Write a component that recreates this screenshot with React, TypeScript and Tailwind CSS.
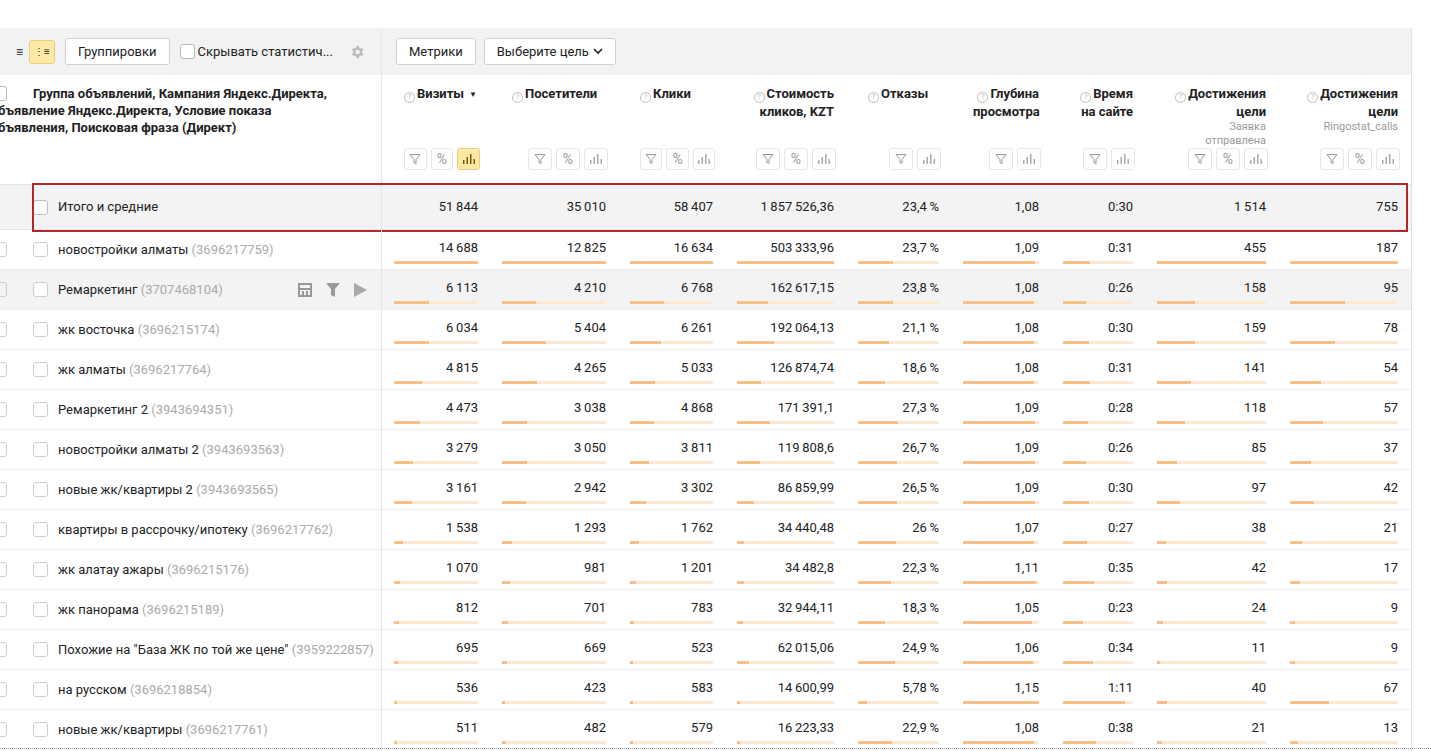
import React from "react";

type Col = { w: number; title: string[]; sub?: string[]; pct: boolean; sorted?: boolean; max: number; parse: (s: string) => number };
const num = (s: string) => parseFloat(s.replace(/[\s\u2009]/g, "").replace(",", ".").replace("%", ""));
const time = (s: string) => { const [m, x] = s.split(":").map(Number); return m * 60 + x; };
const cols: Col[] = [
  { w: 108, title: ["Визиты"], pct: true, sorted: true, max: 14688, parse: num },
  { w: 128, title: ["Посетители"], pct: true, max: 12825, parse: num },
  { w: 107, title: ["Клики"], pct: true, max: 16634, parse: num },
  { w: 121, title: ["Стоимость", "кликов, KZT"], pct: true, max: 503334, parse: num },
  { w: 105, title: ["Отказы"], pct: false, max: 55, parse: num },
  { w: 100, title: ["Глубина", "просмотра"], pct: false, max: 1.15, parse: num },
  { w: 94, title: ["Время", "на сайте"], pct: false, max: 80, parse: time },
  { w: 133, title: ["Достижения", "цели"], sub: ["Заявка", "отправлена"], pct: true, max: 455, parse: num },
  { w: 132, title: ["Достижения", "цели"], sub: ["Ringostat_calls"], pct: true, max: 187, parse: num },
];
const t = (s: string) => s.replace(/ /g, "\u2009");
const total = ["51 844", "35 010", "58 407", "1 857 526,36", "23,4 %", "1,08", "0:30", "1 514", "755"];
const rows: [string, string, string[]][] = [
  ["новостройки алматы", "3696217759", ["14 688", "12 825", "16 634", "503 333,96", "23,7 %", "1,09", "0:31", "455", "187"]],
  ["Ремаркетинг", "3707468104", ["6 113", "4 210", "6 768", "162 617,15", "23,8 %", "1,08", "0:26", "158", "95"]],
  ["жк восточка", "3696215174", ["6 034", "5 404", "6 261", "192 064,13", "21,1 %", "1,08", "0:30", "159", "78"]],
  ["жк алматы", "3696217764", ["4 815", "4 265", "5 033", "126 874,74", "18,6 %", "1,08", "0:31", "141", "54"]],
  ["Ремаркетинг 2", "3943694351", ["4 473", "3 038", "4 868", "171 391,1", "27,3 %", "1,09", "0:28", "118", "57"]],
  ["новостройки алматы 2", "3943693563", ["3 279", "3 050", "3 811", "119 808,6", "26,7 %", "1,09", "0:26", "85", "37"]],
  ["новые жк/квартиры 2", "3943693565", ["3 161", "2 942", "3 302", "86 859,99", "26,5 %", "1,09", "0:30", "97", "42"]],
  ["квартиры в рассрочку/ипотеку", "3696217762", ["1 538", "1 293", "1 762", "34 440,48", "26 %", "1,07", "0:27", "38", "21"]],
  ["жк алатау ажары", "3696215176", ["1 070", "981", "1 201", "34 482,8", "22,3 %", "1,11", "0:35", "42", "17"]],
  ["жк панорама", "3696215189", ["812", "701", "783", "32 944,11", "18,3 %", "1,05", "0:23", "24", "9"]],
  ["Похожие на \"База ЖК по той же цене\"", "3959222857", ["695", "669", "523", "62 015,06", "24,9 %", "1,06", "0:34", "11", "9"]],
  ["на русском", "3696218854", ["536", "423", "583", "14 600,99", "5,78 %", "1,15", "1:11", "40", "67"]],
  ["новые жк/квартиры", "3696217761", ["511", "482", "579", "16 223,33", "22,9 %", "1,08", "0:38", "21", "13"]],
];

const Filter = () => (
  <svg width="12" height="12" viewBox="0 0 12 12" fill="none" stroke="#999" strokeWidth="1"><path d="M1 1.5h10L7 6.5v4L5 9.5v-3z" /></svg>
);
const Bars = ({ c = "#999" }: { c?: string }) => (
  <svg width="12" height="10" viewBox="0 0 12 10" fill={c}><rect x="0" y="6" width="1.5" height="4" /><rect x="3.5" y="3" width="1.5" height="7" /><rect x="7" y="0" width="1.5" height="10" /><rect x="10.5" y="5" width="1.5" height="5" /></svg>
);
const Q = () => <span className="inline-flex w-[11px] h-[11px] rounded-full border border-[#bbb] text-[8px] leading-none items-center justify-center text-[#bbb] mr-[2px] font-normal align-[-1px]">?</span>;
const Btn = ({ children, active }: { children: React.ReactNode; active?: boolean }) => (
  <span className={`inline-flex w-[24px] h-[22px] items-center justify-center border rounded-[3px] text-[14px] text-[#999] ${active ? "bg-[#fde8a5] border-[#e8cf7a]" : "bg-white border-[#e6e6e6]"}`}>{children}</span>
);
const Box = () => <span className="inline-block w-[15px] h-[15px] border border-[#bbb] rounded-[3px] bg-white" />;

export default function App() {
  return (
    <div className="w-[1431px] h-[752px] bg-white overflow-hidden relative text-[13px] text-[#222]" style={{ fontFamily: "Roboto, 'Liberation Sans', sans-serif" }}>
      <div className="h-[28px]" />
      <div className="w-[1412px] border-r border-[#e3e3e3]">
        <div className="flex h-[47px] bg-[#f2f2f2]">
          <div className="w-[382px] flex items-center gap-[6px] pl-[16px] border-r border-[#e6e6e6]">
            <span className="text-[12px] font-bold">≡</span>
            <span className="w-[26px] h-[24px] bg-[#fde8a5] border border-[#e8cf7a] rounded-[3px] flex items-center justify-center text-[10px]">⋮≡</span>
            <span className="px-[12px] h-[27px] flex items-center bg-white border border-[#d0d0d0] rounded-[3px] ml-[4px]">Группировки</span>
            <span className="flex items-center gap-[3px] ml-[4px]"><Box />Скрывать статистич...</span>
            <svg width="16" height="16" viewBox="0 0 24 24" fill="#bbb" className="ml-[10px]"><path d="M19.4 13a7.8 7.8 0 000-2l2.1-1.6-2-3.5-2.5 1a7.6 7.6 0 00-1.7-1L15 3h-4l-.4 2.9a7.6 7.6 0 00-1.7 1l-2.5-1-2 3.5L6.5 11a7.8 7.8 0 000 2l-2.1 1.6 2 3.5 2.5-1a7.6 7.6 0 001.7 1L11 21h4l.4-2.9a7.6 7.6 0 001.7-1l2.5 1 2-3.5zM13 15.5a3.5 3.5 0 110-7 3.5 3.5 0 010 7z" /></svg>
          </div>
          <div className="flex items-center gap-[8px] pl-[14px]">
            <span className="px-[12px] h-[27px] flex items-center bg-white border border-[#d0d0d0] rounded-[3px]">Метрики</span>
            <span className="px-[12px] h-[27px] flex items-center bg-white border border-[#d0d0d0] rounded-[3px] gap-[4px]">Выберите цель
              <svg width="10" height="7" viewBox="0 0 10 7" fill="none" stroke="#222" strokeWidth="1.6"><path d="M1 1l4 4 4-4" /></svg></span>
          </div>
        </div>
        <div className="flex h-[110px] border-b border-[#e6e6e6]">
          <div className="w-[382px] border-r border-[#e6e6e6] pt-[10px] font-bold leading-[17px] relative overflow-hidden">
            <span className="absolute left-[-8px] top-[11px] w-[15px] h-[15px] border border-[#bbb] rounded-[3px]" />
            <div className="-ml-[2px]">
              <div className="pl-[35px]">Группа объявлений, Кампания Яндекс.Директа,</div>
              <div>бъявление Яндекс.Директа, Условие показа</div>
              <div>бъявления, Поисковая фраза (Директ)</div>
            </div>
          </div>
          {cols.map((c, i) => (
            <div key={i} style={{ width: c.w }} className="flex flex-col pr-[12px] pl-[22px]">
              <div className={`pt-[10px] font-bold leading-[17px] h-[72px] ${c.title.length > 1 ? "text-right" : ""}`}>
                {c.title.map((tt, j) => <div key={j}>{j === 0 && <Q />}{tt}{c.sorted && <span className="text-[8px] ml-[5px] align-middle">▼</span>}</div>)}
                {c.sub && c.sub.map((tt, j) => <div key={j} className="text-[11px] font-normal text-[#999] leading-[14px] text-right">{tt}</div>)}
              </div>
              <div className="flex justify-end gap-[4px] mt-[1px]" style={{ marginRight: -2 }}>
                <Btn><Filter /></Btn>
                {c.pct && <Btn>%</Btn>}
                <Btn active={i === 0}><Bars c={i === 0 ? "#7a5a00" : "#aaa"} /></Btn>
              </div>
            </div>
          ))}
        </div>
        <div className="flex h-[45px] bg-[#f3f3f3] border-b border-[#e6e6e6] relative">
          <div className="absolute left-[32px] right-[3px] top-[-2px] bottom-[-3px] border-2 border-[#b3262a]" />
          <div className="w-[382px] border-r border-[#e6e6e6] flex items-center gap-[10px] pl-[33px]"><Box />Итого и средние</div>
          {cols.map((c, i) => <div key={i} style={{ width: c.w }} className="flex items-center justify-end pr-[12px]">{t(total[i])}</div>)}
        </div>
        {rows.map(([name, id, vals], r) => (
          <div key={r} className={`flex h-[40px] border-b border-[#ececec] ${r === 1 ? "bg-[#f3f3f3]" : ""}`}>
            <div className="w-[382px] border-r border-[#e6e6e6] flex items-center relative">
              <span className="absolute left-[-8px] top-[12px] w-[15px] h-[15px] border border-[#ccc] rounded-[3px]" />
              <span className="ml-[33px] mr-[10px] inline-block w-[15px] h-[15px] border border-[#ccc] rounded-[3px] bg-white shrink-0" />
              <span className="whitespace-nowrap">{name} <span className="text-[#aaa]">({id})</span></span>
              {r === 1 && (
                <div className="ml-auto mr-[14px] flex items-center gap-[12px]">
                  <svg width="16" height="16" viewBox="0 0 16 16" fill="#999"><path d="M1 1h14v14H1zM3 3v3h10V3zM3 8v5h2V9h2v4h2V9h2v4h2V8z" fillRule="evenodd" /></svg>
                  <svg width="16" height="16" viewBox="0 0 16 16" fill="#999"><path d="M1 1h14L10 7v8L6 13V7z" /></svg>
                  <svg width="14" height="14" viewBox="0 0 14 14" fill="#aaa"><path d="M1 0l13 7-13 7z" /></svg>
                </div>
              )}
            </div>
            {cols.map((c, i) => {
              const f = Math.min(1, c.parse(vals[i]) / c.max);
              return (
                <div key={i} style={{ width: c.w }} className="flex flex-col justify-center pl-[12px] pr-[12px] pt-[4px]">
                  <div className="text-right leading-[17px]">{t(vals[i])}</div>
                  <div className="h-[3px] bg-[#fde8d2] mt-[5px] rounded-[1px]"><div className="h-full bg-[#f8bf86]" style={{ width: `${Math.max(f * 100, 3)}%` }} /></div>
                </div>
              );
            })}
          </div>
        ))}
      </div>
      <div className="absolute left-0 right-0 top-[748px] border-t border-dotted border-[#999]" />
    </div>
  );
}
